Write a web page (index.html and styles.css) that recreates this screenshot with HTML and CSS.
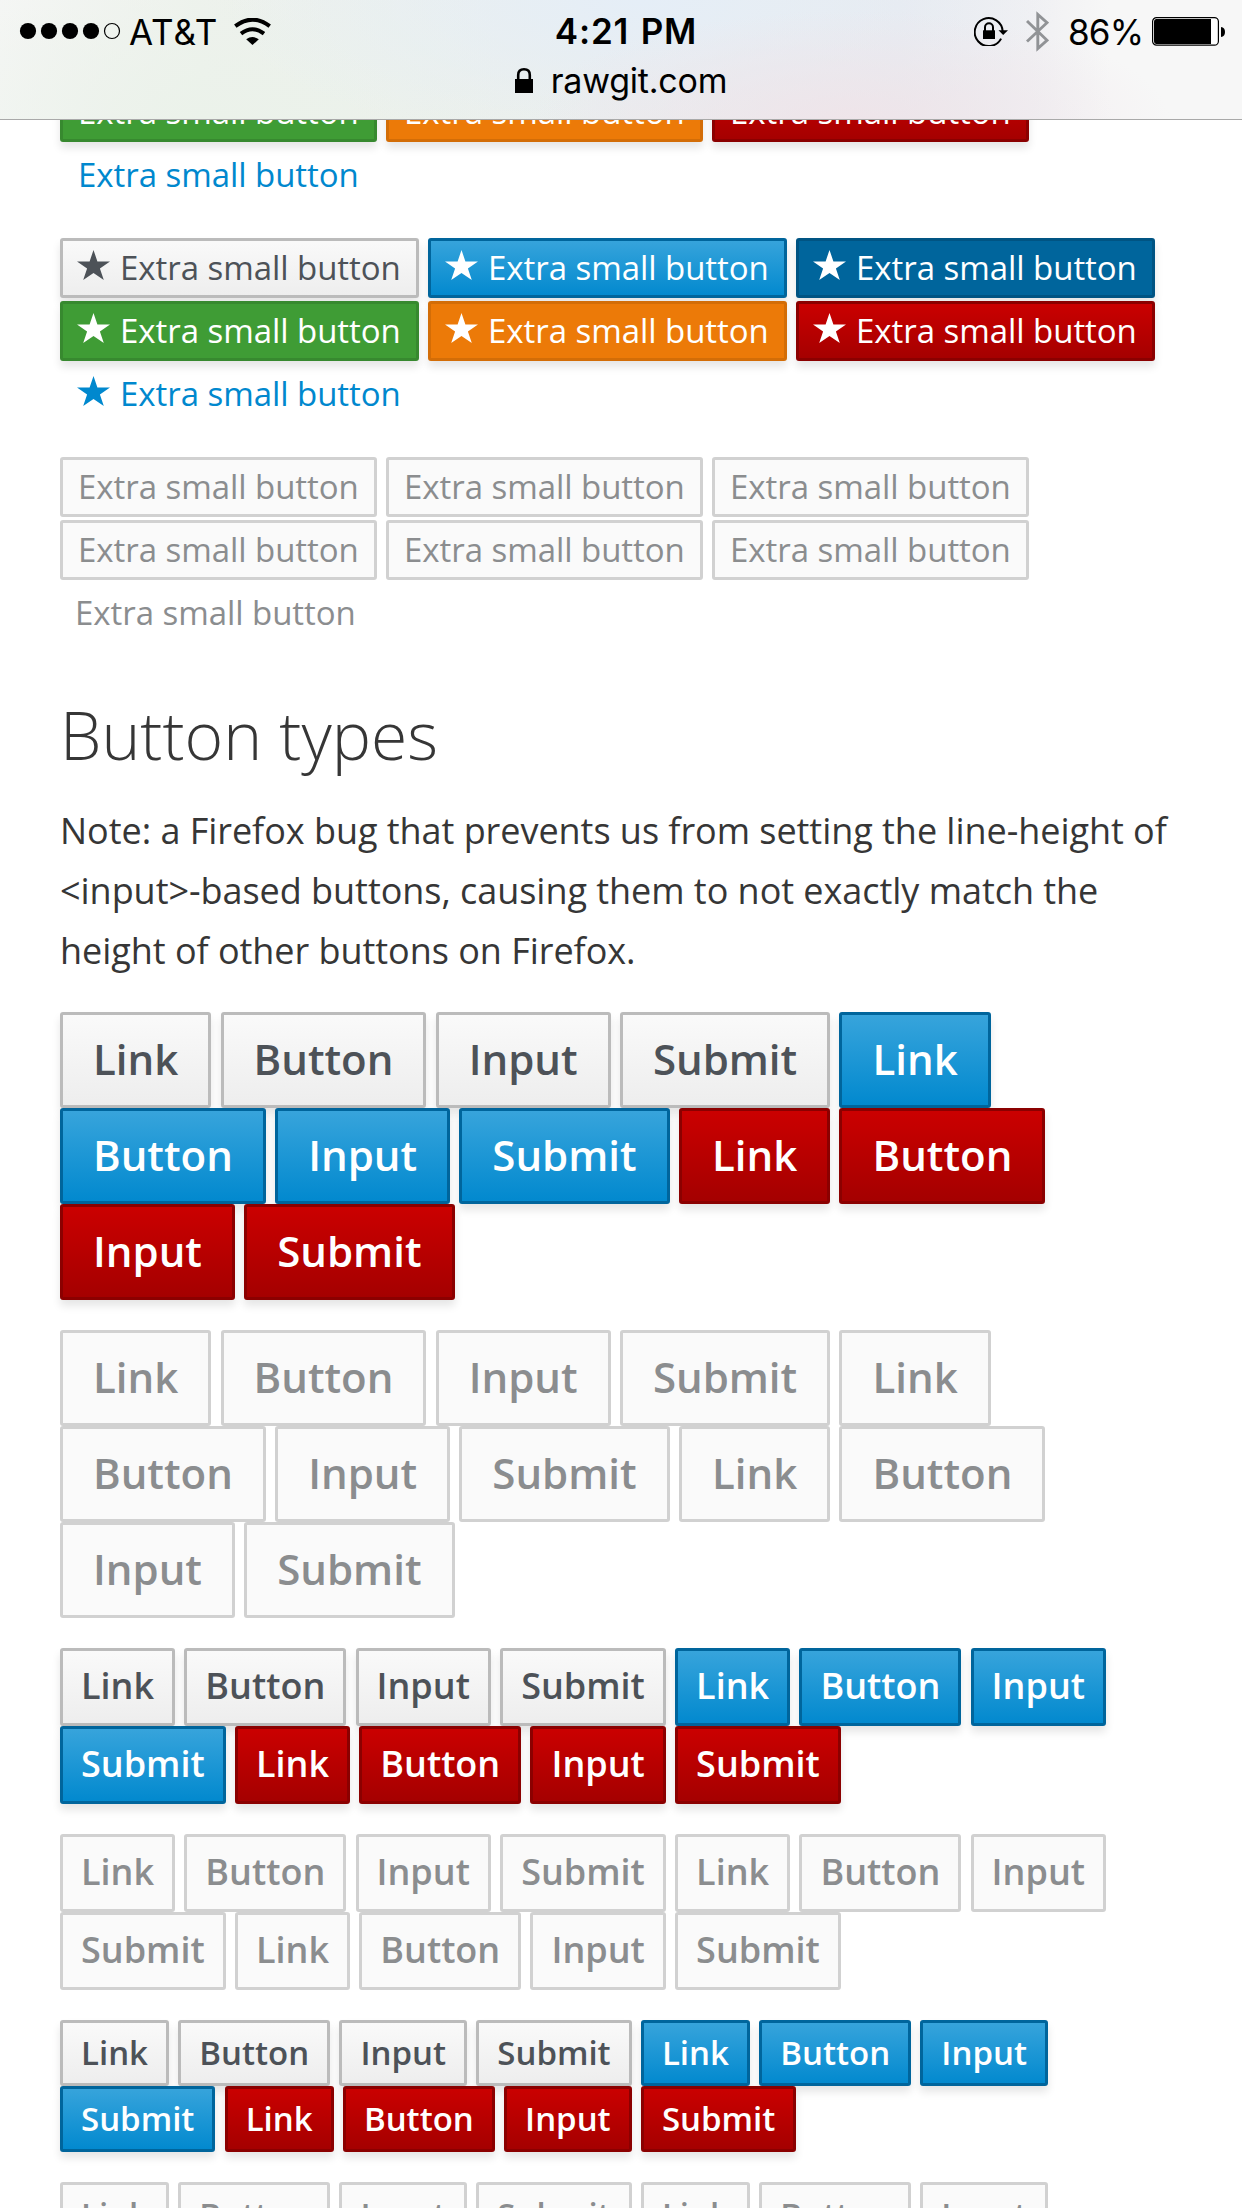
FILE: index.html
```html
<!DOCTYPE html>
<html lang="en">
<head>
<meta charset="utf-8">
<title>Button types</title>
<link rel="stylesheet" href="styles.css">
</head>
<body>
<svg class="sprite" aria-hidden="true">
  <symbol id="star" viewBox="0 0 33 30"><path d="M16.5 0L20.4 11.4H33L22.9 18.5L26.8 30L16.5 22.9L6.2 30L10.1 18.5L0 11.4H12.6Z"/></symbol>
</svg>

<header class="topbar">
  <div class="status">
    <div class="status-left">
      <svg class="dots" viewBox="0 0 104 18"><g><circle cx="9" cy="9" r="8.1"/><circle cx="30" cy="9" r="8.1"/><circle cx="51" cy="9" r="8.1"/><circle cx="72" cy="9" r="8.1"/></g><circle cx="93" cy="9" r="7.5" fill="none" stroke="#000" stroke-width="1.2"/></svg>
      <span class="carrier">AT&amp;T</span>
      <svg class="wifi" viewBox="0 0 37 27"><path d="M12.2 21.3Q18.5 16.8 24.8 21.3L18.5 27Z"/><path d="M7 15.6Q18.5 6.8 30 15.6M1.3 8.2Q18.5 -5 35.7 8.2" fill="none" stroke="#000" stroke-width="4"/></svg>
    </div>
    <span class="time">4:21 PM</span>
    <div class="status-right">
      <svg class="rotation" viewBox="0 0 34 30"><path d="M27.1 22.6A14 14 0 1 1 28.7 15.5" fill="none" stroke="#000" stroke-width="2"/><path d="M24.5 14.3H34L29.2 19Z"/><path d="M9 14.3H21V23H9Z"/><path d="M11 15V11.2a4 4 0 0 1 8 0V15" fill="none" stroke="#000" stroke-width="2"/></svg>
      <svg class="bluetooth" viewBox="0 0 23 41"><path d="M1 10L21 29.3L11.8 37.5V3.5L21 11.7L1 30.5" fill="none" stroke="#919396" stroke-width="2.9"/></svg>
      <span class="percent">86%</span>
      <svg class="battery" viewBox="0 0 73 29"><rect x=".6" y=".6" width="65.8" height="27.6" rx="4" fill="#fff" stroke="#000" stroke-width="1.2"/><path d="M4.5 2H59V27H4.5Q2 27 2 24V5Q2 2 4.5 2Z"/><path d="M69 10Q73 10.5 73 15T69 20Z"/></svg>
    </div>
  </div>
  <div class="address">
    <svg class="lock" viewBox="0 0 18 25"><path d="M0 11H18V25H0Z"/><path d="M3.2 12V7Q3.2 1.3 9 1.3T14.8 7V12" fill="none" stroke="#000" stroke-width="2.6"/></svg>
    <span class="domain">rawgit.com</span>
  </div>
</header>

<main class="content">
  <div class="btn-row row-xs">
    <a class="btn xs success">Extra small button</a>
    <a class="btn xs warning">Extra small button</a>
    <a class="btn xs danger">Extra small button</a>
    <a class="btn xs link">Extra small button</a>
  </div>
  <div class="btn-row row-xs">
    <a class="btn xs default"><svg class="star"><use href="#star"/></svg>Extra small button</a>
    <a class="btn xs primary"><svg class="star"><use href="#star"/></svg>Extra small button</a>
    <a class="btn xs info"><svg class="star"><use href="#star"/></svg>Extra small button</a>
    <a class="btn xs success"><svg class="star"><use href="#star"/></svg>Extra small button</a>
    <a class="btn xs warning"><svg class="star"><use href="#star"/></svg>Extra small button</a>
    <a class="btn xs danger"><svg class="star"><use href="#star"/></svg>Extra small button</a>
    <a class="btn xs link"><svg class="star"><use href="#star"/></svg>Extra small button</a>
  </div>
  <div class="btn-row row-xs">
    <a class="btn xs disabled">Extra small button</a>
    <a class="btn xs disabled">Extra small button</a>
    <a class="btn xs disabled">Extra small button</a>
    <a class="btn xs disabled">Extra small button</a>
    <a class="btn xs disabled">Extra small button</a>
    <a class="btn xs disabled">Extra small button</a>
    <a class="btn xs link link-disabled">Extra small button</a>
  </div>

  <h2 class="title">Button types</h2>
  <p class="note">Note: a Firefox bug that prevents us from setting the line-height of &lt;input&gt;-based buttons, causing them to not exactly match the height of other buttons on Firefox.</p>

  <div class="btn-row">
    <a class="btn lg default">Link</a>
    <button class="btn lg default">Button</button>
    <input class="btn lg default" type="button" value="Input">
    <input class="btn lg default" type="submit" value="Submit">
    <a class="btn lg primary">Link</a>
    <button class="btn lg primary">Button</button>
    <input class="btn lg primary" type="button" value="Input">
    <input class="btn lg primary" type="submit" value="Submit">
    <a class="btn lg danger">Link</a>
    <button class="btn lg danger">Button</button>
    <input class="btn lg danger" type="button" value="Input">
    <input class="btn lg danger" type="submit" value="Submit">
  </div>
  <div class="btn-row">
    <a class="btn lg disabled">Link</a>
    <button class="btn lg disabled" disabled>Button</button>
    <input class="btn lg disabled" type="button" value="Input" disabled>
    <input class="btn lg disabled" type="submit" value="Submit" disabled>
    <a class="btn lg disabled">Link</a>
    <button class="btn lg disabled" disabled>Button</button>
    <input class="btn lg disabled" type="button" value="Input" disabled>
    <input class="btn lg disabled" type="submit" value="Submit" disabled>
    <a class="btn lg disabled">Link</a>
    <button class="btn lg disabled" disabled>Button</button>
    <input class="btn lg disabled" type="button" value="Input" disabled>
    <input class="btn lg disabled" type="submit" value="Submit" disabled>
  </div>
  <div class="btn-row">
    <a class="btn default">Link</a>
    <button class="btn default">Button</button>
    <input class="btn default" type="button" value="Input">
    <input class="btn default" type="submit" value="Submit">
    <a class="btn primary">Link</a>
    <button class="btn primary">Button</button>
    <input class="btn primary" type="button" value="Input">
    <input class="btn primary" type="submit" value="Submit">
    <a class="btn danger">Link</a>
    <button class="btn danger">Button</button>
    <input class="btn danger" type="button" value="Input">
    <input class="btn danger" type="submit" value="Submit">
  </div>
  <div class="btn-row">
    <a class="btn disabled">Link</a>
    <button class="btn disabled" disabled>Button</button>
    <input class="btn disabled" type="button" value="Input" disabled>
    <input class="btn disabled" type="submit" value="Submit" disabled>
    <a class="btn disabled">Link</a>
    <button class="btn disabled" disabled>Button</button>
    <input class="btn disabled" type="button" value="Input" disabled>
    <input class="btn disabled" type="submit" value="Submit" disabled>
    <a class="btn disabled">Link</a>
    <button class="btn disabled" disabled>Button</button>
    <input class="btn disabled" type="button" value="Input" disabled>
    <input class="btn disabled" type="submit" value="Submit" disabled>
  </div>
  <div class="btn-row">
    <a class="btn sm default">Link</a>
    <button class="btn sm default">Button</button>
    <input class="btn sm default" type="button" value="Input">
    <input class="btn sm default" type="submit" value="Submit">
    <a class="btn sm primary">Link</a>
    <button class="btn sm primary">Button</button>
    <input class="btn sm primary" type="button" value="Input">
    <input class="btn sm primary" type="submit" value="Submit">
    <a class="btn sm danger">Link</a>
    <button class="btn sm danger">Button</button>
    <input class="btn sm danger" type="button" value="Input">
    <input class="btn sm danger" type="submit" value="Submit">
  </div>
  <div class="btn-row">
    <a class="btn sm disabled">Link</a>
    <button class="btn sm disabled" disabled>Button</button>
    <input class="btn sm disabled" type="button" value="Input" disabled>
    <input class="btn sm disabled" type="submit" value="Submit" disabled>
    <a class="btn sm disabled">Link</a>
    <button class="btn sm disabled" disabled>Button</button>
    <input class="btn sm disabled" type="button" value="Input" disabled>
  </div>
</main>
</body>
</html>
```
FILE: styles.css
```css
* {
  box-sizing: border-box;
}

body {
  margin: 0;
  height: 2208px;
  overflow: hidden;
  background: #fff;
  color: #363636;
  font: 36px/60px "Open Sans", sans-serif;
}

.sprite {
  display: none;
}

/* Browser bar */
.topbar {
  position: relative;
  z-index: 1;
  height: 120px;
  border-bottom: 1px solid #a9a9a9;
  color: #000;
  font-family: Inter, "Liberation Sans", sans-serif;
  background:
    radial-gradient(ellipse 320px 110px at 850px 120px, rgba(239, 228, 233, .95), rgba(239, 228, 233, 0)),
    radial-gradient(ellipse 420px 150px at 640px 0, #e5eef7, rgba(229, 238, 247, 0)),
    radial-gradient(ellipse 400px 200px at 210px 120px, #ebf2ea, rgba(235, 242, 234, 0)),
    linear-gradient(90deg, #f7f7f7 0, #eff2ee 200px, #ecefec 500px, #e8eaef 900px, #f0f0f3 1030px, #f7f7f7 1110px);
}

.status {
  display: grid;
  grid-template-columns: 1fr auto 1fr;
  height: 60px;
  line-height: 60px;
}

.status-left,
.status-right {
  display: flex;
  align-items: center;
}

.status-left {
  padding-left: 19px;
}

.status-right {
  justify-content: flex-end;
  padding-right: 17px;
}

.dots {
  width: 104px;
  height: 18px;
}

.carrier {
  width: 87px;
  padding-top: 2px;
  margin-left: 6px;
  font-size: 35px;
  letter-spacing: .9px;
}

.wifi {
  width: 37px;
  height: 27px;
  margin-left: 18px;
}

.time {
  padding: 1px 0 0 10px;
  font-size: 35px;
  font-weight: 600;
  letter-spacing: .8px;
  word-spacing: 2px;
}

.rotation {
  width: 34px;
  height: 30px;
}

.bluetooth {
  width: 23px;
  height: 41px;
  margin-left: 18px;
}

.percent {
  width: 72px;
  padding-top: 2px;
  margin-left: 19px;
  font-size: 35px;
  letter-spacing: -.8px;
}

.battery {
  width: 73px;
  height: 29px;
  margin-left: 12px;
}

.address {
  display: flex;
  justify-content: center;
  align-items: center;
  height: 40px;
}

.lock {
  width: 18px;
  height: 25px;
  margin-right: 18px;
}

.domain {
  padding-top: 2px;
  font-size: 34px;
  line-height: 38px;
  letter-spacing: -.2px;
}

/* Page content */
.content {
  margin-top: -38px;
  padding: 0 60px;
}

.btn-row {
  display: flex;
  flex-wrap: wrap;
  gap: 0 9.25px;
  margin-bottom: 30px;
}

.row-xs {
  row-gap: 3px;
  margin-bottom: 33px;
}

.title {
  margin: 55px 0 31px;
  font-size: 66px;
  font-weight: 300;
  line-height: 72px;
}

.note {
  margin: 0 0 31px;
  letter-spacing: -.04px;
}

/* Buttons */
.btn {
  margin: 0;
  height: 78px;
  padding: 5px 18px 7px;
  border: 3px solid;
  border-radius: 3px;
  background-origin: border-box;
  box-shadow: 0 6px 9px rgba(0, 0, 0, .1);
  font: 600 36px/60px "Open Sans", sans-serif;
  white-space: nowrap;
  appearance: none;
}

.btn.lg {
  height: 96px;
  padding: 17px 30px 19px;
  font-size: 42px;
  line-height: 54px;
}

.btn.sm {
  height: 66px;
  padding: 6px 18px;
  font-size: 33px;
  line-height: 48px;
}

.btn.xs {
  display: flex;
  height: 60px;
  padding: 0 15px;
  font-size: 33px;
  font-weight: 400;
  line-height: 54px;
  letter-spacing: -.05px;
}

.star {
  width: 33px;
  height: 30px;
  margin: 9px 10px 0 -1px;
  fill: currentColor;
}

.default {
  border-color: #bbb;
  background-color: #f1f1f1;
  background-image: linear-gradient(#fafafa, #ededed);
  color: #4d5258;
}

.primary {
  border-color: #00659c;
  background-color: #0088ce;
  background-image: linear-gradient(#39a5dc, #0088ce);
  color: #fff;
}

.danger {
  border-color: #8b0000;
  background-color: #a30000;
  background-image: linear-gradient(#c00, #a30000);
  color: #fff;
}

.info {
  border-color: #005483;
  background-color: #00659c;
  color: #fff;
}

.success {
  border-color: #37892f;
  background-color: #3f9c35;
  color: #fff;
}

.warning {
  border-color: #d36d07;
  background-color: #ec7a08;
  color: #fff;
}

.btn.disabled {
  border-color: #d1d1d1;
  background: #fafafa;
  box-shadow: none;
  color: #8b8d8f;
}

.btn.link {
  border-color: transparent;
  box-shadow: none;
  color: #0088ce;
}

.btn.link-disabled {
  padding: 3px 15px;
  border: 0;
  color: #8b8d8f;
}
```
